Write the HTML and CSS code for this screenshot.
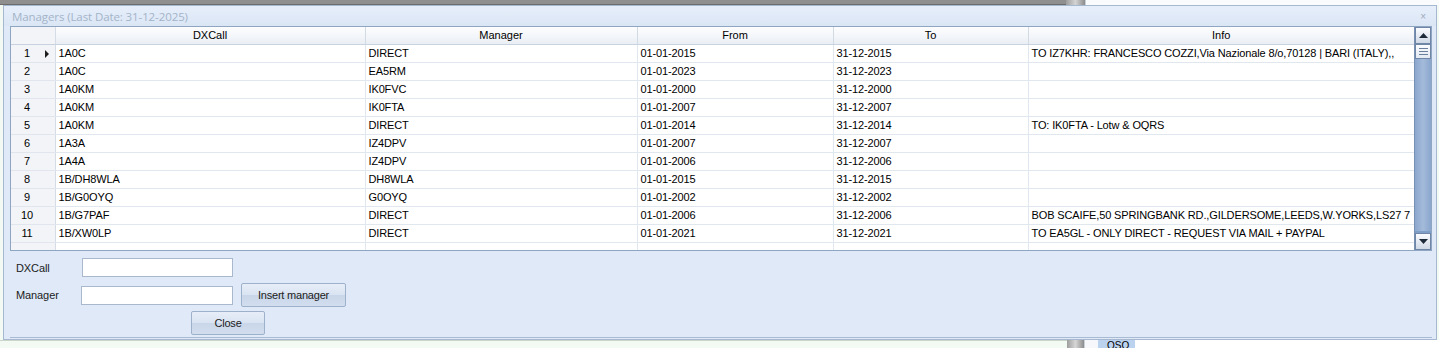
FILE: index.html
```html
<!DOCTYPE html>
<html>
<head>
<meta charset="utf-8">
<link rel="stylesheet" href="styles.css">
</head>
<body>
<div class="desktop">
  <div class="topstrip">
    <div class="ts-left"></div>
    <div class="ts-scroll"></div>
    <div class="ts-right"></div>
  </div>
  <div class="window">
    <div class="titlebar">
      <span class="title">Managers (Last Date: 31-12-2025)</span>
      <span class="close-x">×</span>
    </div>
    <div class="body">
      <div class="grid">
        <div class="table-wrap">
          <table>
            <colgroup>
              <col class="c-rh"><col class="c-dx"><col class="c-mg"><col class="c-fr"><col class="c-to"><col class="c-in">
            </colgroup>
            <thead>
              <tr><th class="rh"></th><th>DXCall</th><th>Manager</th><th>From</th><th>To</th><th>Info</th></tr>
            </thead>
            <tbody>
              <tr><td class="rh"><span class="num">1</span><span class="cur"></span></td><td>1A0C</td><td>DIRECT</td><td>01-01-2015</td><td>31-12-2015</td><td>TO IZ7KHR: FRANCESCO COZZI,Via Nazionale 8/o,70128 | BARI (ITALY),,</td></tr>
              <tr><td class="rh"><span class="num">2</span></td><td>1A0C</td><td>EA5RM</td><td>01-01-2023</td><td>31-12-2023</td><td></td></tr>
              <tr><td class="rh"><span class="num">3</span></td><td>1A0KM</td><td>IK0FVC</td><td>01-01-2000</td><td>31-12-2000</td><td></td></tr>
              <tr><td class="rh"><span class="num">4</span></td><td>1A0KM</td><td>IK0FTA</td><td>01-01-2007</td><td>31-12-2007</td><td></td></tr>
              <tr><td class="rh"><span class="num">5</span></td><td>1A0KM</td><td>DIRECT</td><td>01-01-2014</td><td>31-12-2014</td><td>TO: IK0FTA - Lotw &amp; OQRS</td></tr>
              <tr><td class="rh"><span class="num">6</span></td><td>1A3A</td><td>IZ4DPV</td><td>01-01-2007</td><td>31-12-2007</td><td></td></tr>
              <tr><td class="rh"><span class="num">7</span></td><td>1A4A</td><td>IZ4DPV</td><td>01-01-2006</td><td>31-12-2006</td><td></td></tr>
              <tr><td class="rh"><span class="num">8</span></td><td>1B/DH8WLA</td><td>DH8WLA</td><td>01-01-2015</td><td>31-12-2015</td><td></td></tr>
              <tr><td class="rh"><span class="num">9</span></td><td>1B/G0OYQ</td><td>G0OYQ</td><td>01-01-2002</td><td>31-12-2002</td><td></td></tr>
              <tr><td class="rh"><span class="num">10</span></td><td>1B/G7PAF</td><td>DIRECT</td><td>01-01-2006</td><td>31-12-2006</td><td>BOB SCAIFE,50 SPRINGBANK RD.,GILDERSOME,LEEDS,W.YORKS,LS27 7</td></tr>
              <tr><td class="rh"><span class="num">11</span></td><td>1B/XW0LP</td><td>DIRECT</td><td>01-01-2021</td><td>31-12-2021</td><td>TO EA5GL - ONLY DIRECT - REQUEST VIA MAIL + PAYPAL</td></tr>
              <tr class="cut"><td class="rh"></td><td></td><td></td><td></td><td></td><td></td></tr>
            </tbody>
          </table>
        </div>
        <div class="vscroll">
          <div class="sb-btn"><svg width="9" height="5" viewBox="0 0 9 5"><path d="M0 5 L4.5 0 L9 5 Z" fill="#1d2a3a"/></svg></div>
          <div class="sb-thumb">
            <div class="grip"><svg width="9" height="8" viewBox="0 0 9 8"><path d="M0 0.5H9M0 3.5H9M0 6.5H9" stroke="#6a7f9c" stroke-width="1"/></svg></div>
          </div>
          <div class="sb-btn"><svg width="9" height="5" viewBox="0 0 9 5"><path d="M0 0 L9 0 L4.5 5 Z" fill="#1d2a3a"/></svg></div>
        </div>
      </div>
      <div class="panel">
        <div class="form-row">
          <label class="lbl">DXCall</label>
          <div class="input in-dx"></div>
        </div>
        <div class="form-row r2">
          <label class="lbl">Manager</label>
          <div class="input in-mg"></div>
          <button class="btn b-ins">Insert manager</button>
        </div>
        <div class="form-row r3">
          <button class="btn b-close">Close</button>
        </div>
      </div>
    </div>
  </div>
  <div class="bottomstrip">
    <div class="bs-left"></div>
    <div class="bs-scroll"></div>
    <div class="bs-gap"></div>
    <div class="qso-tab">QSO</div>
    <div class="bs-right"></div>
  </div>
</div>
</body>
</html>
```
FILE: styles.css
```css
* { box-sizing: border-box; }
html, body { margin: 0; padding: 0; }
body {
  width: 1439px;
  height: 348px;
  overflow: hidden;
  font-family: "Liberation Sans", Arial, sans-serif;
  font-size: 11px;
  color: #000;
  background: #f3faf3;
}
.desktop {
  display: flex;
  flex-direction: column;
  width: 1439px;
  height: 348px;
  background: #f3faf3;
}
.topstrip {
  display: flex;
  height: 5px;
  flex: none;
}
.ts-left { width: 1066px; background: #8f8f8f; border-bottom: 1px solid #6c6c6c; }
.ts-scroll { width: 19px; background: linear-gradient(90deg, #9d9d9d, #d4d4d4 50%, #8c8c8c); }
.ts-right { flex: 1; background: #fafbfd; border-left: 1px solid #c8d0da; }

.window {
  margin-left: 3px;
  width: 1434px;
  height: 335px;
  flex: none;
  border: 1px solid #a6b8cf;
  background: #dfe9f7;
  display: flex;
  flex-direction: column;
}
.titlebar {
  height: 20px;
  flex: none;
  display: flex;
  align-items: center;
  justify-content: space-between;
  padding: 0 8px 0 8px;
  background: linear-gradient(180deg, #e6eefa 0%, #dbe6f5 100%);
}
.title {
  color: #a3b4c8;
  font-family: "Open Sans", "Liberation Sans", sans-serif;
  font-size: 11.5px;
  letter-spacing: -0.1px;
}
.close-x {
  color: #9eaabb;
  font-size: 10px;
  margin-right: 2px;
}
.body {
  flex: 1;
  display: flex;
  flex-direction: column;
  padding: 0 4px 1px 6px;
}
.grid {
  height: 225px;
  flex: none;
  border: 1px solid #8fa6c3;
  background: #fff;
  display: flex;
  overflow: hidden;
}
.table-wrap {
  width: 1403px;
  overflow: hidden;
}
table {
  border-collapse: collapse;
  table-layout: fixed;
  width: 1403px;
}
col.c-rh { width: 44px; }
col.c-dx { width: 310px; }
col.c-mg { width: 272px; }
col.c-fr { width: 196px; }
col.c-to { width: 195px; }
col.c-in { width: 386px; }
th {
  height: 17px;
  padding: 0;
  font-weight: normal;
  text-align: center;
  background: linear-gradient(180deg, #fdfdfe 0%, #f2f5f9 60%, #e9eef4 100%);
  border-right: 1px solid #d2dae4;
  border-bottom: 1px solid #c9d3df;
  white-space: nowrap;
}
th:last-child { border-right: none; }
td {
  height: 18px;
  padding: 0 0 0 3px;
  border-right: 1px solid #e1e7ef;
  border-bottom: 1px solid #e1e7ef;
  white-space: nowrap;
  overflow: hidden;
  line-height: 17px;
  letter-spacing: -0.13px;
}
td:last-child { border-right: none; }
td.rh, th.rh {
  background: #f2f4f8;
  border-right: 1px solid #d5dce6;
  position: relative;
  padding: 0;
}
td.rh { border-bottom: 1px solid #e1e6ee; }
.num {
  display: inline-block;
  width: 32px;
  text-align: center;
}
.cur {
  position: absolute;
  left: 34px;
  top: 5px;
  width: 0;
  height: 0;
  border-top: 4px solid transparent;
  border-bottom: 4px solid transparent;
  border-left: 4px solid #1e1e1e;
}
tr.cut td { height: 12px; border-bottom: none; }

.vscroll {
  width: 17px;
  display: flex;
  flex-direction: column;
  background: #7f9ec8;
  border-left: 1px solid #7890b3;
}
.sb-btn {
  height: 17px;
  flex: none;
  display: flex;
  align-items: center;
  justify-content: center;
  background: linear-gradient(180deg, #fbfcfe 0%, #e3e9f2 55%, #cfd9e6 100%);
  border: 1px solid #6f86a6;
}
.sb-thumb {
  flex: 1;
  background: linear-gradient(90deg, #8aa6cd 0%, #a4bbda 50%, #8aa6cd 100%);
  display: flex;
  flex-direction: column;
  margin-bottom: 2px;
}
.grip {
  height: 15px;
  background: linear-gradient(180deg, #fbfcfe 0%, #e3e9f2 100%);
  border: 1px solid #6f86a6;
  display: flex;
  align-items: center;
  justify-content: center;
}

.panel {
  flex: 1;
  display: flex;
  flex-direction: column;
  padding: 7px 0 0 6px;
  border-bottom: 1px solid #a9bbd3;
}
.form-row {
  display: flex;
  align-items: center;
  height: 19px;
}
.form-row.r2 { margin-top: 6px; height: 24px; }
.form-row.r3 { margin-top: 4px; height: 24px; padding-left: 175px; }
.lbl {
  width: 66px;
  color: #1b1b1b;
  font-size: 11px;
  letter-spacing: -0.1px;
}
.input {
  height: 19px;
  background: #fff;
  border: 1px solid #a9b8cc;
}
.in-dx { width: 151px; }
.in-mg { width: 152px; margin-left: -1px; }
.btn {
  font-family: "Liberation Sans", Arial, sans-serif;
  font-size: 11px;
  letter-spacing: -0.2px;
  color: #1b1b1b;
  height: 24px;
  padding: 0;
  border: 1px solid #9eb1cb;
  border-radius: 2px;
  background: linear-gradient(180deg, #e7eef8 0%, #d9e3f1 50%, #c9d6e9 51%, #d2deee 100%);
}
.b-ins { width: 105px; margin-left: 8px; }
.b-close { width: 74px; }

.bottomstrip {
  flex: 1;
  display: flex;
  margin-top: 0;
}
.bs-left { width: 1067px; background: #f3faf3; border-top: 1px solid #c9d6c9; }
.bs-scroll { width: 17px; background: linear-gradient(90deg, #9d9d9d, #d6d6d6 50%, #8c8c8c); }
.bs-gap { width: 14px; background: #f5f7fa; border-left: 1px solid #c8d0da; }
.qso-tab {
  width: 37px;
  background: #bcd3ef;
  font-size: 10px;
  padding: 2px 0 0 9px;
  line-height: 8px;
  overflow: hidden;
}
.bs-right { flex: 1; background: #fff; }
```
